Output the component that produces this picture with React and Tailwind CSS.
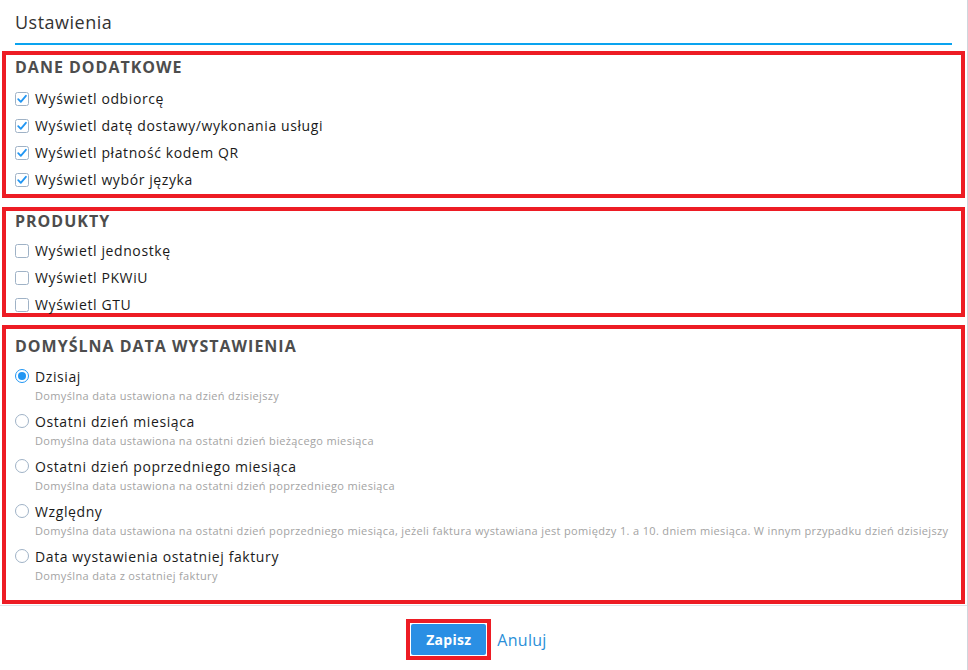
import { useState } from 'react';

const font = { fontFamily: '"Open Sans", "Liberation Sans", sans-serif' };

const dodatkowe = [
    { label: 'Wyświetl odbiorcę', on: true },
    { label: 'Wyświetl datę dostawy/wykonania usługi', on: true },
    { label: 'Wyświetl płatność kodem QR', on: true },
    { label: 'Wyświetl wybór języka', on: true },
];

const produkty = [
    { label: 'Wyświetl jednostkę', on: false },
    { label: 'Wyświetl PKWiU', on: false },
    { label: 'Wyświetl GTU', on: false },
];

const daty = [
    { id: 'today', label: 'Dzisiaj', desc: 'Domyślna data ustawiona na dzień dzisiejszy' },
    { id: 'last', label: 'Ostatni dzień miesiąca', desc: 'Domyślna data ustawiona na ostatni dzień bieżącego miesiąca' },
    { id: 'prev', label: 'Ostatni dzień poprzedniego miesiąca', desc: 'Domyślna data ustawiona na ostatni dzień poprzedniego miesiąca' },
    {
        id: 'rel',
        label: 'Względny',
        desc: 'Domyślna data ustawiona na ostatni dzień poprzedniego miesiąca, jeżeli faktura wystawiana jest pomiędzy 1. a 10. dniem miesiąca. W innym przypadku dzień dzisiejszy',
    },
    { id: 'lastInv', label: 'Data wystawienia ostatniej faktury', desc: 'Domyślna data z ostatniej faktury' },
];

function Check({ on }) {
    return (
        <svg width="14" height="14" viewBox="0 0 14 14" className="shrink-0">
            <rect x="0.5" y="0.5" width="13" height="13" rx="2" fill="#fff" stroke="#9fb2c6" />
            {on && <path d="M3.2 7.2 L5.8 9.8 L10.9 3.8" fill="none" stroke="#2196f3" strokeWidth="1.8" strokeLinecap="round" strokeLinejoin="round" />}
        </svg>
    );
}

function Radio({ on }) {
    return (
        <svg width="14" height="14" viewBox="0 0 14 14" className="shrink-0">
            <circle cx="7" cy="7" r="6.5" fill="#fff" stroke={on ? '#2196f3' : '#9fb2c6'} />
            {on && <circle cx="7" cy="7" r="4" fill="#2196f3" />}
        </svg>
    );
}

function CheckRow({ label, on }) {
    return (
        <label className="flex items-center gap-[6px] h-[27px] text-[14px] tracking-[0.6px] text-[#1a1a1a] cursor-pointer">
            <Check on={on} />
            <span>{label}</span>
        </label>
    );
}

export default function App() {
    const [data, setData] = useState('today');

    return (
        <div className="w-[968px] h-[670px] bg-white" style={font}>
            <div className="border-r border-[#cfd6dd] h-full">
                <div className="pb-[1px] border-b border-[#dfe5ea]">
                    {/* Header */}
                    <div className="mx-[15px] pt-[9px] pb-[8px] border-b-2 border-[#0aa3ef]">
                        <h1 className="text-[18px] leading-[26px] tracking-[0.5px] text-[#333] font-normal">Ustawienia</h1>
                    </div>

                    {/* Dane dodatkowe */}
                    <section className="mx-[2px] mt-[6px] h-[147px] border-4 border-[#ed1c24] px-[9px]">
                        <h2 className="text-[16px] leading-6 tracking-[1px] font-bold text-[#4d4d4d]">DANE DODATKOWE</h2>
                        <div className="mt-[6px]">
                            {dodatkowe.map((r) => (
                                <CheckRow key={r.label} {...r} />
                            ))}
                        </div>
                    </section>

                    {/* Produkty */}
                    <section className="mx-[2px] mt-[9px] h-[110px] border-4 border-[#ed1c24] px-[9px]">
                        <h2 className="text-[16px] leading-5 tracking-[1px] font-bold text-[#4d4d4d]">PRODUKTY</h2>
                        <div className="mt-[6px]">
                            {produkty.map((r) => (
                                <CheckRow key={r.label} {...r} />
                            ))}
                        </div>
                    </section>

                    {/* Domyslna data */}
                    <section className="mx-[2px] mt-[8px] h-[279px] border-4 border-[#ed1c24] px-[9px] pt-[5px]">
                        <h2 className="text-[16px] leading-6 tracking-[1px] font-bold text-[#4d4d4d] mb-[7px]">DOMYŚLNA DATA WYSTAWIENIA</h2>
                        {daty.map((d) => (
                            <div key={d.id} className="mb-[5px]">
                                <label className="flex items-center gap-[6px] h-[22px] text-[14px] tracking-[0.6px] text-[#1a1a1a] cursor-pointer" onClick={() => setData(d.id)}>
                                    <Radio on={data === d.id} />
                                    <span>{d.label}</span>
                                </label>
                                <p className="pl-[20px] h-[18px] leading-[18px] text-[11px] tracking-[0.35px] text-[#a3a3a3] whitespace-nowrap">{d.desc}</p>
                            </div>
                        ))}
                    </section>
                </div>

                {/* Footer */}
                <div className="flex justify-center items-center gap-[6px] pt-[13px] pr-[14px]">
                    <span className="border-4 border-[#ed1c24] p-[1px]">
                        <button className="w-[75px] h-[31px] bg-[#2a8fe4] text-white text-[14px] tracking-[0.3px] font-bold rounded-[2px]">Zapisz</button>
                    </span>
                    <a className="text-[16px] tracking-[0.3px] text-[#2b8fd8] cursor-pointer">Anuluj</a>
                </div>
            </div>
        </div>
    );
}
